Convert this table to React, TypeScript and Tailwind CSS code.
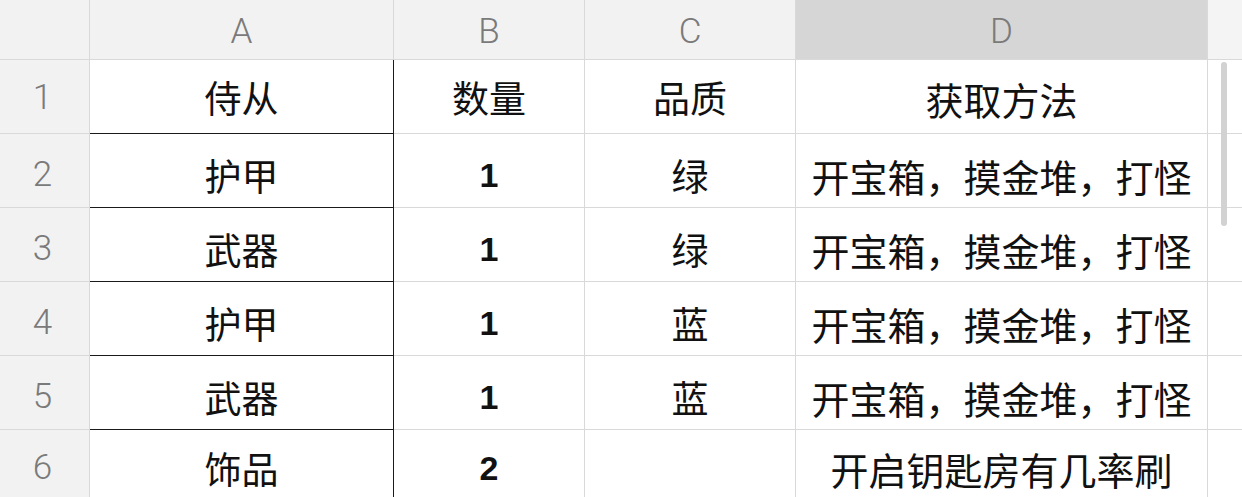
const cols = ['A', 'B', 'C', 'D'];

const rows = [
  ['侍从', '数量', '品质', '获取方法'],
  ['护甲', '1', '绿', '开宝箱，摸金堆，打怪'],
  ['武器', '1', '绿', '开宝箱，摸金堆，打怪'],
  ['护甲', '1', '蓝', '开宝箱，摸金堆，打怪'],
  ['武器', '1', '蓝', '开宝箱，摸金堆，打怪'],
  ['饰品', '2', '', '开启钥匙房有几率刷'],
];

const cjk = "font-['Noto_Sans_CJK_SC',sans-serif]";
const num = "font-['Liberation_Sans','Noto_Sans_CJK_SC',sans-serif] font-bold";

export default function App() {
  return (
    <div className="relative h-[497px] w-[1242px] overflow-hidden bg-white">
      <div className="grid grid-cols-[90px_304px_191px_211px_412px_34px]">
        {/* Column header */}
        <div className="h-[60px] border-r border-b border-[#d9d9d9] bg-[#f2f2f2]" />
        {cols.map((c) => (
          <div
            key={c}
            className={`flex h-[60px] items-center justify-center border-r border-b border-[#d9d9d9] pt-[5px] font-['Roboto',sans-serif] text-[35px] font-light text-[#7a7a7a] ${
              c === 'D' ? 'bg-[#d6d6d6]' : 'bg-[#f2f2f2]'
            }`}
          >
            {c}
          </div>
        ))}
        <div className="h-[60px] border-b border-[#d9d9d9] bg-[#f4f4f4]" />

        {rows.map((r, i) => {
          const pad = i === 0 ? 'pt-[3px]' : i === 5 ? 'pt-[4px]' : 'pt-[10px]';
          return (
            <div key={i} className="contents">
              <div className={`flex h-[74px] items-center justify-center border-r border-b border-[#d9d9d9] bg-[#f2f2f2] pr-1 font-['Roboto',sans-serif] text-[35px] font-light text-[#7a7a7a] ${pad}`}>
                {i + 1}
              </div>
              <div className={`flex h-[74px] items-center justify-center border-r border-b border-[#1a1a1a] text-[37px] text-[#111] ${cjk} ${pad}`}>
                {r[0]}
              </div>
              <div
                className={`flex h-[74px] items-center justify-center border-r border-b border-[#d9d9d9] text-[#111] ${pad} ${
                  i === 0 ? `text-[37px] ${cjk}` : `text-[34px] ${num}`
                }`}
              >
                {r[1]}
              </div>
              <div className={`flex h-[74px] items-center justify-center border-r border-b border-[#d9d9d9] text-[37px] text-[#111] ${cjk} ${pad}`}>
                {r[2]}
              </div>
              <div className={`flex h-[74px] items-center justify-center whitespace-nowrap border-r border-b border-[#d9d9d9] text-[38px] text-[#111] ${cjk} ${pad}`}>
                {r[3]}
              </div>
              <div className="h-[74px] border-b border-[#d9d9d9]" />
            </div>
          );
        })}
      </div>

      {/* scrollbar */}
      <div className="absolute left-[1221px] top-[62px] h-[164px] w-[6px] rounded-full bg-[#d2d2d2]" />
    </div>
  );
}
